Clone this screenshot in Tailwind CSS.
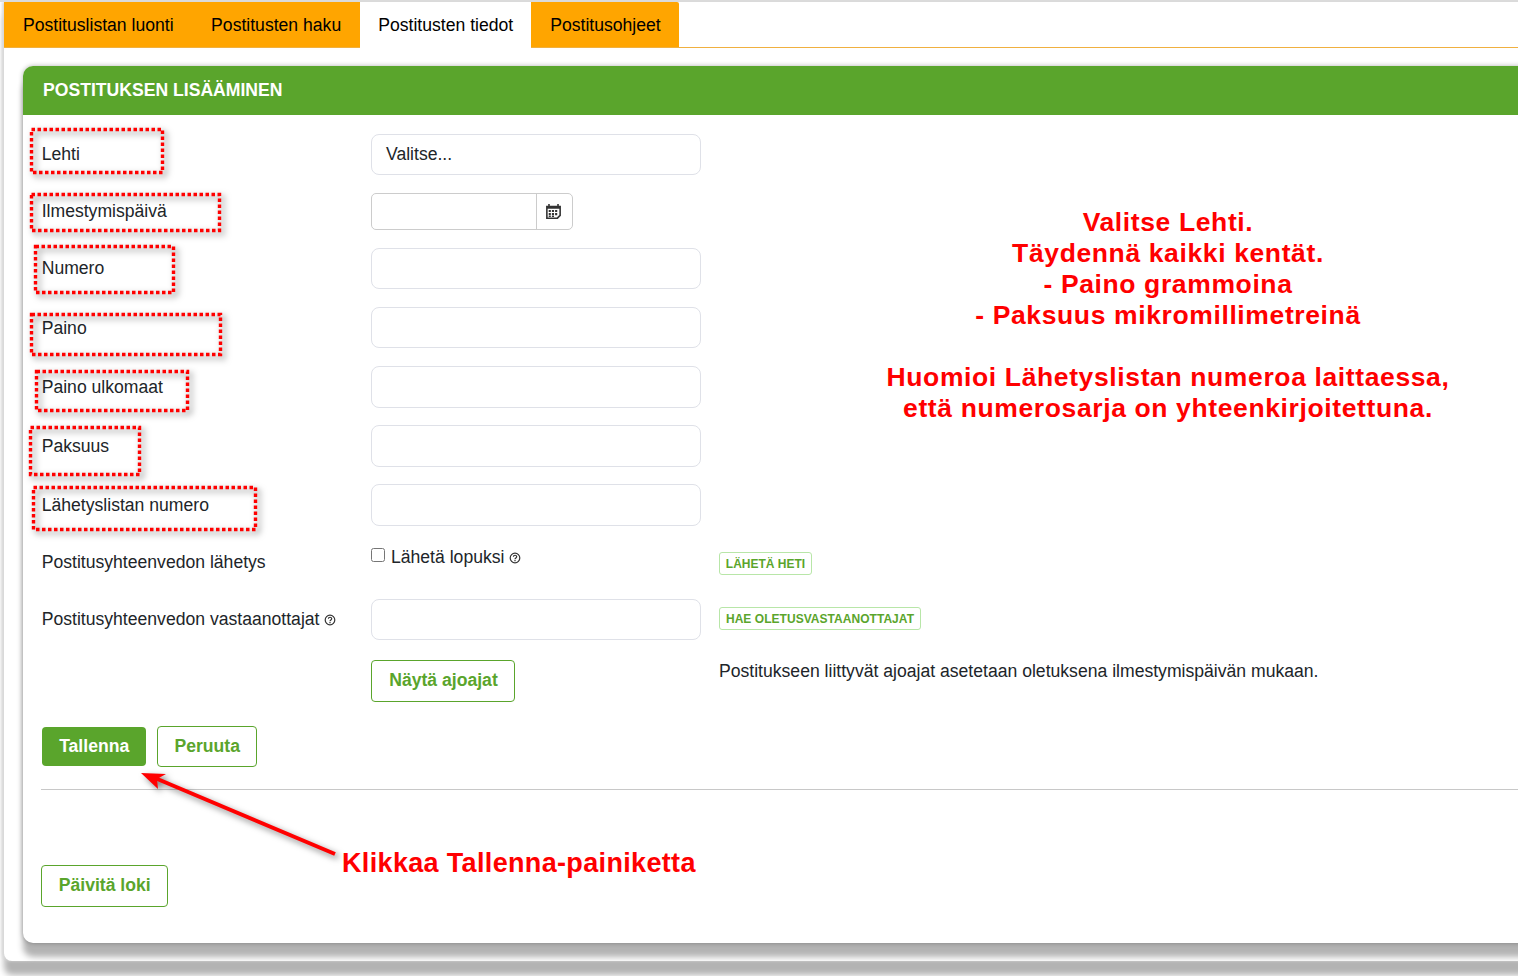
<!DOCTYPE html>
<html lang="fi">
<head>
<meta charset="utf-8">
<title>Postituksen lisääminen</title>
<script src="https://cdn.jsdelivr.net/npm/@tailwindcss/browser@4"></script>
</head>
<body class="bg-white">
<div class="relative w-[1518px] h-[976px] overflow-hidden bg-white font-['Liberation_Sans',Arial,sans-serif] text-[#212529] text-[17.6px]">
  <div class="h-[2px] bg-[#dcdcdc]"></div>
  <div class="ml-[4px] w-[1560px] h-[959px] bg-white rounded-bl-[8px] shadow-[-2px_0_3px_#d8d8d8,0_14px_6px_#b3b3b3]">
    <nav class="flex h-[46px] border-b border-[#f0b040]">
      <a class="flex items-center h-[45px] pl-[19px] pr-[18.500px] pt-[2px] bg-[#ffa500] text-black">Postituslistan luonti</a>
      <a class="flex items-center h-[45px] pl-[19px] pr-[19px] pt-[2px] bg-[#ffa500] text-black">Postitusten haku</a>
      <a class="flex items-center h-[46px] px-[18px] bg-white text-black">Postitusten tiedot</a>
      <a class="flex items-center h-[45px] pl-[19px] pr-[18px] pt-[2px] bg-[#ffa500] text-black rounded-tr-[2px]">Postitusohjeet</a>
    </nav>
    <section class="mt-[18px] ml-[19px] w-[1530px] h-[877px] bg-white rounded-[10px] shadow-[0_0_5px_rgba(0,0,0,0.3),0_14px_6px_#b3b3b3]">
      <h2 class="flex items-center h-[49px] pl-[20px] rounded-t-[10px] bg-[#5aa52c] text-white font-bold text-[17.6px]">POSTITUKSEN LISÄÄMINEN</h2>
      <div class="pt-[19px] pl-[18.700px]">
        <div class="flex items-center h-[41px]">
          <label class="w-[329.300px]">Lehti</label>
          <div class="flex items-center w-[330px] h-[41px] pl-[14px] border border-[#dfe1e8] rounded-[8px]">Valitse...</div>
        </div>
        <div class="flex items-center h-[37px] mt-[18px]">
          <label class="w-[329.300px]">Ilmestymispäivä</label>
          <div class="flex w-[202px] h-[37px] border border-[#cccccc] rounded-[5px]">
            <div class="w-[165px] border-r border-[#cccccc]"></div>
            <div class="flex flex-1 items-center justify-center pr-[2px]">
              <svg width="17" height="17" viewBox="0 0 16 16"><path fill="#333" d="M1 2.500h2V1h1.500v1.500h7V1H13v1.500h2V12l-3 3H1z"/><path fill="#fff" d="M2.500 5.500h11v5.800l-2.400 2.400H2.500z"/><path fill="#333" d="M3.500 6.500h2v2h-2zM6.500 6.500h2v2h-2zM9.500 6.500h2v2h-2zM3.500 9.500h2v2h-2zM6.500 9.500h2v2h-2zM9.500 9.500h2v2h-2zM3.500 12h2v1.200h-2zM6.500 12h2v1.200h-2z"/></svg>
            </div>
          </div>
        </div>
        <div class="flex items-center h-[41px] mt-[18px]">
          <label class="w-[329.300px]">Numero</label>
          <input class="w-[330px] h-[41px] border border-[#dfe1e8] rounded-[8px]">
        </div>
        <div class="flex items-center h-[41px] mt-[18px]">
          <label class="w-[329.300px] pt-[1px]">Paino</label>
          <input class="w-[330px] h-[41px] border border-[#dfe1e8] rounded-[8px]">
        </div>
        <div class="flex items-center h-[42px] mt-[18px]">
          <label class="w-[329.300px]">Paino ulkomaat</label>
          <input class="w-[330px] h-[42px] border border-[#dfe1e8] rounded-[8px]">
        </div>
        <div class="flex items-center h-[42px] mt-[17px]">
          <label class="w-[329.300px]">Paksuus</label>
          <input class="w-[330px] h-[42px] border border-[#dfe1e8] rounded-[8px]">
        </div>
        <div class="flex items-center h-[42px] mt-[17px]">
          <label class="w-[329.300px]">Lähetyslistan numero</label>
          <input class="w-[330px] h-[42px] border border-[#dfe1e8] rounded-[8px]">
        </div>
        <div class="flex h-[40px] mt-[19px]">
          <label class="w-[329.300px] pt-[4px]">Postitusyhteenvedon lähetys</label>
          <div class="flex items-start w-[348px] gap-[6px]">
            <input type="checkbox" class="mt-[3px] w-[14px] h-[14px]">
            <span class="flex items-center gap-[5px] leading-[24px]">Lähetä lopuksi
              <svg width="12" height="12" viewBox="0 0 12 12" class="mt-[1px]"><circle cx="6" cy="6" r="4.800" fill="none" stroke="#333" stroke-width="1.200"/><path fill="none" stroke="#333" stroke-width="1.200" d="M4.400 4.800c0-2.100 3.300-2.100 3.300 0 0 1.200-1.700 1.100-1.700 2.500"/><path fill="#333" d="M5.400 8h1.200v1.200H5.400z"/></svg>
            </span>
          </div>
          <button class="mt-[7px] w-[93px] h-[23px] bg-white border border-[#b8e6a8] rounded-[3px] text-[#5aa52c] font-bold text-[12px]">LÄHETÄ HETI</button>
        </div>
        <div class="flex items-center h-[41px] mt-[14px]">
          <label class="flex items-center gap-[5px] w-[329.300px]">Postitusyhteenvedon vastaanottajat
            <svg width="12" height="12" viewBox="0 0 12 12" class="mt-[2px]"><circle cx="6" cy="6" r="4.800" fill="none" stroke="#333" stroke-width="1.200"/><path fill="none" stroke="#333" stroke-width="1.200" d="M4.400 4.800c0-2.100 3.300-2.100 3.300 0 0 1.200-1.700 1.100-1.700 2.500"/><path fill="#333" d="M5.400 8h1.200v1.200H5.400z"/></svg>
          </label>
          <input class="w-[330px] h-[41px] border border-[#dfe1e8] rounded-[8px]">
          <button class="ml-[18px] -mt-[3px] w-[202px] h-[23px] pt-[1px] bg-white border border-[#b8e6a8] rounded-[3px] text-[#5aa52c] font-bold text-[12px] tracking-[0.04px]">HAE OLETUSVASTAANOTTAJAT</button>
        </div>
        <div class="flex h-[42px] mt-[20px]">
          <div class="w-[329.300px]"></div>
          <button class="w-[144px] h-[42px] pl-[1px] pb-[2px] bg-white border border-[#5aa52c] rounded-[4px] text-[#5aa52c] font-bold">Näytä ajoajat</button>
          <p class="ml-[204px] leading-[22px]">Postitukseen liittyvät ajoajat asetetaan oletuksena ilmestymispäivän mukaan.</p>
        </div>
        <div class="flex items-center gap-[11px] h-[41px] mt-[24px]">
          <button class="w-[104px] h-[39px] pl-[1px] bg-[#5aa52c] rounded-[4px] text-white font-bold">Tallenna</button>
          <button class="w-[100px] h-[41px] pl-[1px] bg-white border border-[#5aa52c] rounded-[4px] text-[#5aa52c] font-bold">Peruuta</button>
        </div>
        <hr class="mt-[22px] -ml-[1px] border-t border-[#c8c8c8]">
        <button class="mt-[75px] -ml-[1px] w-[127px] h-[42px] pl-[1px] pb-[2px] bg-white border border-[#5aa52c] rounded-[4px] text-[#5aa52c] font-bold">Päivitä loki</button>
      </div>
    </section>
  </div>

  <!-- Annotation layer -->
  <svg class="absolute left-0 top-0 drop-shadow-[3px_3px_3px_rgba(0,0,0,0.5)]" width="1518" height="976" viewBox="0 0 1518 976" fill="none" stroke="#ff0000" stroke-width="3.400" stroke-dasharray="3.500 2.500">
    <rect x="31.500" y="129.500" width="131" height="43"/>
    <rect x="31.500" y="194.500" width="188" height="36"/>
    <rect x="35.500" y="246.500" width="138" height="46"/>
    <rect x="31.500" y="314.500" width="189" height="40"/>
    <rect x="36.500" y="371.500" width="151" height="39"/>
    <rect x="30.500" y="427.500" width="109" height="47"/>
    <rect x="33.500" y="487.500" width="222" height="42"/>
    <g stroke-dasharray="none">
      <path stroke-width="4" d="M335 854 155 778"/>
      <path fill="#ff0000" stroke="none" d="M141 773 166 774 157 779 158 789z"/>
    </g>
  </svg>
  <div class="absolute left-[868px] top-[207px] w-[600px] text-center font-bold text-[#ff0000] text-[26.500px] leading-[31px] tracking-[0.62px]">
    <p>Valitse Lehti.</p>
    <p>Täydennä kaikki kentät.</p>
    <p>- Paino grammoina</p>
    <p>- Paksuus mikromillimetreinä</p>
    <p>&nbsp;</p>
    <p>Huomioi Lähetyslistan numeroa laittaessa,</p>
    <p>että numerosarja on yhteenkirjoitettuna.</p>
  </div>
  <p class="absolute left-[342px] top-[848px] font-bold text-[#ff0000] text-[27px] leading-[31px] tracking-[0.34px]">Klikkaa Tallenna-painiketta</p>
</div>
</body>
</html>
